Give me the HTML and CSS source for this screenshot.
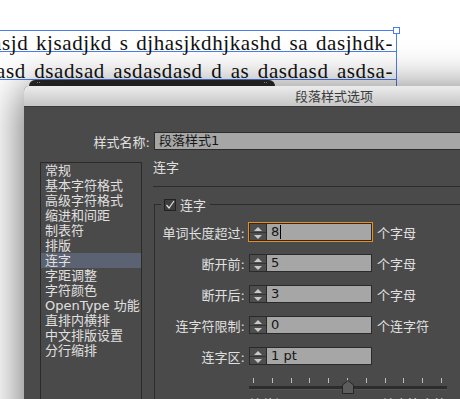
FILE: index.html
```html
<!DOCTYPE html>
<html lang="zh-CN">
<head>
    <meta charset="UTF-8">
    <title>段落样式选项</title>
    <link rel="stylesheet" href="styles.css">
</head>
<body>
    <div class="frame">
        <div class="frame-line first">asjd kjsadjkd s djhasjkdhjkashd sa dasjhdk-</div>
        <div class="frame-line second">asd dsadsad asdasdasd d as dasdasd asdsa-</div>
        <span class="handle"></span>
    </div>

    <div class="back-window"><span class="grip"></span><span class="grip right"></span></div>

    <div class="dialog">
        <div class="titlebar">段落样式选项</div>
        <div class="dialog-body">
            <div class="name-row">
                <span class="name-label">样式名称:</span>
                <div class="name-input">段落样式1</div>
            </div>
            <div class="main">
                <ul class="nav">
                    <li>常规</li>
                    <li>基本字符格式</li>
                    <li>高级字符格式</li>
                    <li>缩进和间距</li>
                    <li>制表符</li>
                    <li>排版</li>
                    <li class="active">连字</li>
                    <li>字距调整</li>
                    <li>字符颜色</li>
                    <li>OpenType 功能</li>
                    <li>直排内横排</li>
                    <li>中文排版设置</li>
                    <li>分行缩排</li>
                </ul>
                <div class="panel">
                    <div class="panel-title">连字</div>
                    <div class="group">
                        <div class="group-title">
                            <span class="checkbox">
                                <svg width="10" height="10" viewBox="0 0 10 10"><polyline points="1.5,5 4,8 9,1" fill="none" stroke="#e2e2e2" stroke-width="1.2"/></svg>
                            </span>
                            连字
                        </div>
                        <div class="rows">
                            <div class="row">
                                <span class="label">单词长度超过:</span>
                                <div class="field focus"><span class="spin"><i class="up"></i><i class="down"></i></span><span class="value">8<b class="caret"></b></span></div>
                                <span class="unit">个字母</span>
                            </div>
                            <div class="row">
                                <span class="label">断开前:</span>
                                <div class="field"><span class="spin"><i class="up"></i><i class="down"></i></span><span class="value">5</span></div>
                                <span class="unit">个字母</span>
                            </div>
                            <div class="row">
                                <span class="label">断开后:</span>
                                <div class="field"><span class="spin"><i class="up"></i><i class="down"></i></span><span class="value">3</span></div>
                                <span class="unit">个字母</span>
                            </div>
                            <div class="row">
                                <span class="label">连字符限制:</span>
                                <div class="field"><span class="spin"><i class="up"></i><i class="down"></i></span><span class="value">0</span></div>
                                <span class="unit">个连字符</span>
                            </div>
                            <div class="row">
                                <span class="label">连字区:</span>
                                <div class="field"><span class="spin"><i class="up"></i><i class="down"></i></span><span class="value">1 pt</span></div>
                            </div>
                        </div>
                        <div class="slider">
                            <div class="ticks">
                                <i></i><i></i><i></i><i></i><i></i><i></i><i></i><i></i><i></i><i></i><i></i>
                            </div>
                            <div class="track"></div>
                            <svg class="thumb" width="12" height="14" viewBox="0 0 12 14"><path d="M0.5 5 L6 0.5 L11.5 5 L11.5 13.5 L0.5 13.5 Z" fill="#5c5c5c" stroke="#262626"/></svg>
                        </div>
                        <div class="slider-labels"><span>较佳间距</span><span>较少连字符</span></div>
                    </div>
                </div>
            </div>
        </div>
    </div>
</body>
</html>
```

FILE: styles.css
```css
body {
    margin: 0;
    width: 460px;
    height: 399px;
    overflow: hidden;
    position: relative;
    background: #ffffff;
    font-family: "DejaVu Sans", "Noto Sans CJK SC", sans-serif;
    font-size: 13px;
}
.frame {
    position: absolute;
    left: -8px;
    top: 30px;
    width: 404px;
    height: 60px;
    border-top: 1px solid #4a7ef0;
    border-right: 1px solid #4a7ef0;
}
.frame-line {
    font-family: "Liberation Serif", serif;
    font-size: 21px;
    letter-spacing: 0.6px;
    color: #111;
    text-align: justify;
    text-align-last: justify;
    border-bottom: 1px solid #4a7ef0;
    padding-right: 3px;
}
.frame-line.first {
    height: 20px;
    line-height: 25.8px;
}
.frame-line.second {
    height: 27px;
    line-height: 39.8px;
    padding-left: 4px;
}
.handle {
    position: absolute;
    right: -4px;
    top: -4px;
    width: 5px;
    height: 5px;
    background: #fff;
    border: 1px solid #4a7ef0;
}
.back-window {
    position: absolute;
    left: 29px;
    top: 80px;
    width: 246px;
    height: 30px;
    background: #2a2a2a;
    border-radius: 6px 6px 0 0;
}
.grip {
    position: absolute;
    left: 8px;
    top: 2px;
    width: 3px;
    height: 1px;
    border-top: 1px dotted #9a9a9a;
}
.grip.right {
    left: auto;
    right: 8px;
}
.dialog {
    position: absolute;
    left: 24px;
    top: 86px;
    width: 620px;
    height: 420px;
    background: #4a4a4a;
    border-radius: 5px 5px 0 0;
    box-shadow: 0 6px 40px 4px rgba(0, 0, 0, 0.55);
    color: #e0e0e0;
}
.titlebar {
    height: 21px;
    line-height: 21px;
    text-align: center;
    color: #3a3a3a;
    background: linear-gradient(#ececec, #c6c6c6);
    border-radius: 5px 5px 0 0;
    border-bottom: 1px solid #3c3c3c;
    box-sizing: border-box;
}
.dialog-body {
    padding: 25px 0 0 16px;
}
.name-row {
    display: flex;
    align-items: center;
    height: 18px;
}
.name-label {
    width: 110px;
    text-align: right;
}
.name-input {
    margin-left: 4px;
    flex: 1;
    height: 18px;
    box-sizing: border-box;
    line-height: 16px;
    padding-left: 4px;
    background: #a6a6a6;
    border: 1px solid #2c2c2c;
    border-right: none;
    color: #161616;
}
.main {
    display: grid;
    grid-template-columns: 102px 1fr;
    column-gap: 11px;
    margin-top: 12px;
}
.nav {
    list-style: none;
    margin: 0;
    padding: 0;
    height: 300px;
    border: 1px solid #2a2a2a;
}
.nav li {
    height: 15px;
    line-height: 15px;
    padding-left: 4px;
    white-space: nowrap;
}
.nav li.active {
    background: #5b6272;
}
.panel-title {
    margin-top: -2px;
    line-height: 15px;
    padding-bottom: 11px;
    border-bottom: 1px solid #2c2c2c;
}
.group {
    margin-top: 17px;
    margin-left: 1px;
    border-top: 1px solid #2c2c2c;
    border-left: 1px solid #2c2c2c;
    height: 300px;
}
.group-title {
    display: flex;
    align-items: center;
    gap: 4px;
    width: max-content;
    height: 13px;
    margin: -7px 0 0 6px;
    padding: 0 4px 0 3px;
    background: #4a4a4a;
}
.checkbox {
    width: 10px;
    height: 10px;
    border: 1px solid #222;
    background: #3e3e3e;
    display: flex;
}
.rows {
    display: flex;
    flex-direction: column;
    gap: 13px;
    margin-top: 12px;
}
.row {
    display: flex;
    align-items: center;
    height: 18px;
}
.label {
    width: 90px;
    text-align: right;
    white-space: nowrap;
}
.field {
    margin-left: 4px;
    width: 123px;
    height: 18px;
    box-sizing: border-box;
    display: flex;
    border: 1px solid #2a2a2a;
    background: #a6a6a6;
}
.field.focus {
    outline: 1px solid #f08c10;
}
.spin {
    width: 16px;
    display: flex;
    flex-direction: column;
    background: #4e4e4e;
    border-right: 1px solid #2a2a2a;
}
.spin i {
    flex: 1;
    position: relative;
}
.spin i.up {
    border-bottom: 1px solid #353535;
}
.spin i::after {
    content: '';
    position: absolute;
    left: 4px;
    top: 3px;
    border-left: 4px solid transparent;
    border-right: 4px solid transparent;
}
.spin i.up::after {
    border-bottom: 4px solid #c9c9c9;
}
.spin i.down::after {
    top: 2px;
    border-top: 4px solid #c9c9c9;
}
.value {
    padding-left: 4px;
    line-height: 16px;
    color: #151515;
    display: flex;
    align-items: center;
}
.caret {
    display: inline-block;
    width: 1px;
    height: 14px;
    margin-left: 1px;
    background: #000;
}
.unit {
    margin-left: 5px;
    white-space: nowrap;
}
.slider {
    position: relative;
    margin: 13px 0 0 94px;
    width: 198px;
}
.ticks {
    display: flex;
    justify-content: space-between;
    padding: 0 5px 0 4px;
    height: 5px;
}
.ticks i {
    width: 1px;
    background: #bdbdbd;
}
.track {
    margin-top: 3px;
    height: 4px;
    background: #2c2c2c;
    border-bottom: 1px solid #555;
    box-sizing: border-box;
}
.thumb {
    position: absolute;
    left: 93px;
    top: 2px;
}
.slider-labels {
    display: flex;
    justify-content: space-between;
    margin: 7px 0 0 94px;
    width: 198px;
    line-height: 15px;
}
```
